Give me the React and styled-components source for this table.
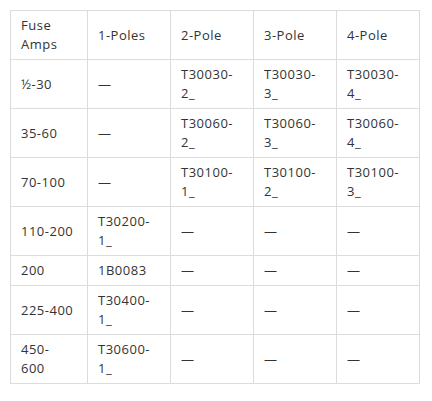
import React from "react";
import styled, { createGlobalStyle } from "styled-components";

const Global = createGlobalStyle`
  html, body { margin: 0; padding: 0; background: #fff; }
  body { font-family: "Open Sans", "Liberation Sans", sans-serif; }
`;

const Page = styled.div`
  padding: 10px;
`;

const Table = styled.table`
  border-collapse: collapse;
  table-layout: fixed;
  width: 410px;
  font-family: "Open Sans", "Liberation Sans", sans-serif;
  font-size: 13px;
  line-height: 19px;
  letter-spacing: 0.5px;
  color: #333;
`;

const Col = styled.col`
  width: ${(p) => (p.$first ? "77px" : "83px")};
`;

const Cell = styled.td`
  border: 1px solid #dcdcdc;
  padding: 5px 10px;
  vertical-align: middle;
  text-align: left;
  font-weight: 400;
`;

const HeadCell = styled(Cell).attrs({ as: "th" })``;

const DASH = "—";

const header = ["Fuse Amps", "1-Poles", "2-Pole", "3-Pole", "4-Pole"];
const rows = [
  ["½-30", DASH, "T30030-2_", "T30030-3_", "T30030-4_"],
  ["35-60", DASH, "T30060-2_", "T30060-3_", "T30060-4_"],
  ["70-100", DASH, "T30100-1_", "T30100-2_", "T30100-3_"],
  ["110-200", "T30200-1_", DASH, DASH, DASH],
  ["200", "1B0083", DASH, DASH, DASH],
  ["225-400", "T30400-1_", DASH, DASH, DASH],
  [<>450-<br />600</>, "T30600-1_", DASH, DASH, DASH],
];

export default function App() {
  return (
    <Page>
      <Global />
      <Table>
        <colgroup>
          {header.map((_, i) => (
            <Col key={i} $first={i === 0} />
          ))}
        </colgroup>
        <thead>
          <tr>
            {header.map((h, i) => (
              <HeadCell key={i}>{h}</HeadCell>
            ))}
          </tr>
        </thead>
        <tbody>
          {rows.map((r, i) => (
            <tr key={i}>
              {r.map((c, j) => (
                <Cell key={j}>{c}</Cell>
              ))}
            </tr>
          ))}
        </tbody>
      </Table>
    </Page>
  );
}
